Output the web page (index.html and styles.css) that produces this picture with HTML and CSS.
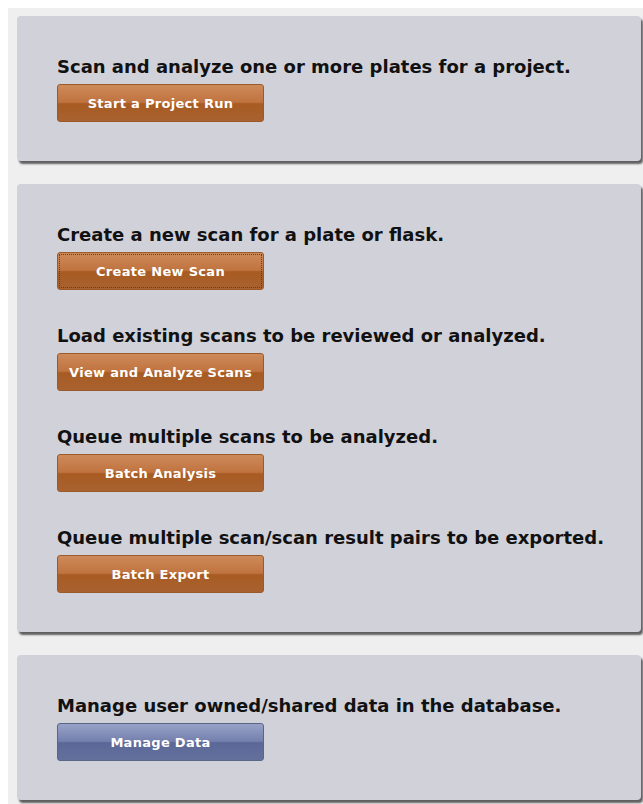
FILE: index.html
```html
<!DOCTYPE html>
<html lang="en">
<head>
<meta charset="utf-8">
<title>Scanner Home</title>
<link rel="stylesheet" href="styles.css">
</head>
<body>
  <main class="home">
    <section class="panel">
      <div class="task">
        <h2 class="task-title">Scan and analyze one or more plates for a project.</h2>
        <button class="btn btn-orange" type="button">Start a Project Run</button>
      </div>
    </section>

    <section class="panel">
      <div class="task">
        <h2 class="task-title">Create a new scan for a plate or flask.</h2>
        <button class="btn btn-orange is-focused" type="button">Create New Scan</button>
      </div>
      <div class="task">
        <h2 class="task-title">Load existing scans to be reviewed or analyzed.</h2>
        <button class="btn btn-orange" type="button">View and Analyze Scans</button>
      </div>
      <div class="task">
        <h2 class="task-title">Queue multiple scans to be analyzed.</h2>
        <button class="btn btn-orange" type="button">Batch Analysis</button>
      </div>
      <div class="task">
        <h2 class="task-title">Queue multiple scan/scan result pairs to be exported.</h2>
        <button class="btn btn-orange" type="button">Batch Export</button>
      </div>
    </section>

    <section class="panel">
      <div class="task">
        <h2 class="task-title">Manage user owned/shared data in the database.</h2>
        <button class="btn btn-blue" type="button">Manage Data</button>
      </div>
    </section>
  </main>
</body>
</html>
```

FILE: styles.css
```css
html, body {
  overflow: hidden;
}

body {
  margin: 8px 0 0 8px;
  background: #ffffff;
  font-family: "DejaVu Sans", Verdana, sans-serif;
}

.home {
  background: #efefef;
  padding: 8px 2px 8px 9px;
  display: flex;
  flex-direction: column;
  gap: 23px;
  min-height: 800px;
}

.panel {
  background: #d1d1da;
  border-radius: 4px;
  box-shadow: 2px 3px 2px #5f5f5f;
  padding: 40px 40px 39px;
  display: flex;
  flex-direction: column;
  gap: 35px;
}

.task {
  display: flex;
  flex-direction: column;
  align-items: flex-start;
  gap: 6px;
}

.task-title {
  margin: 0;
  font-size: 18px;
  line-height: 22px;
  font-weight: bold;
  letter-spacing: 0;
  white-space: nowrap;
  color: #111111;
}

.btn {
  width: 207px;
  height: 38px;
  border-radius: 3px;
  font-family: inherit;
  font-size: 13px;
  font-weight: bold;
  letter-spacing: 0.3px;
  color: #ffffff;
  cursor: pointer;
  padding: 0;
}

.btn-orange {
  border: 1px solid #9a5a2c;
  background: linear-gradient(to bottom, #cd8a5a 0%, #c0733f 48%, #a85b22 52%, #a86230 100%);
}

.btn-blue {
  border: 1px solid #5a6688;
  background: linear-gradient(to bottom, #98a2c8 0%, #7480ad 48%, #5b6897 52%, #64709c 100%);
}

.is-focused {
  outline: 1px dotted #6b3c1a;
  outline-offset: -3px;
}
```
